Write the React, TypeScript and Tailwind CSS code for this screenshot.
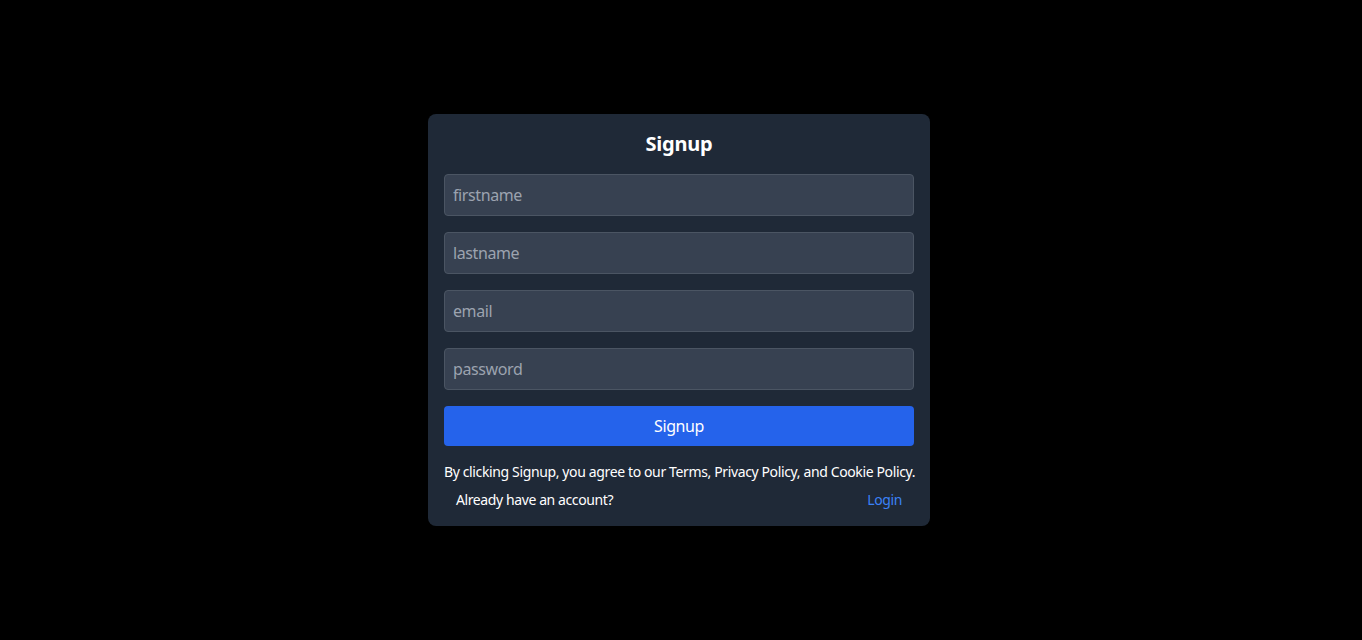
export default function App() {
  return (
    <div className="min-h-screen w-full bg-black flex items-center justify-center pr-1 font-['Noto_Sans',sans-serif] tracking-[-0.4px]">
      <div className="w-[502px] bg-[#1f2937] rounded-lg p-4">
        <h1 className="text-xl font-bold text-white text-center mb-4 tracking-[-0.2px]">Signup</h1>
        <form className="flex flex-col gap-4" onSubmit={(e) => e.preventDefault()}>
          <input
            type="text"
            placeholder="firstname"
            className="w-full px-2 py-2 bg-[#374151] border border-[#4b5563] rounded text-white placeholder-[#9ca3af] outline-none"
          />
          <input
            type="text"
            placeholder="lastname"
            className="w-full px-2 py-2 bg-[#374151] border border-[#4b5563] rounded text-white placeholder-[#9ca3af] outline-none"
          />
          <input
            type="email"
            placeholder="email"
            className="w-full px-2 py-2 bg-[#374151] border border-[#4b5563] rounded text-white placeholder-[#9ca3af] outline-none"
          />
          <input
            type="password"
            placeholder="password"
            className="w-full px-2 py-2 bg-[#374151] border border-[#4b5563] rounded text-white placeholder-[#9ca3af] outline-none"
          />
          <button type="submit" className="w-full py-2 bg-[#2563eb] rounded text-white">
            Signup
          </button>
        </form>
        <p className="mt-4 text-sm text-white text-center whitespace-nowrap tracking-[-0.37px]">
          By clicking Signup, you agree to our Terms, Privacy Policy, and Cookie Policy.
        </p>
        <div className="mt-2 px-3 flex justify-between text-sm">
          <span className="text-white">Already have an account?</span>
          <a href="#" className="text-[#3b82f6]">Login</a>
        </div>
      </div>
    </div>
  );
}
